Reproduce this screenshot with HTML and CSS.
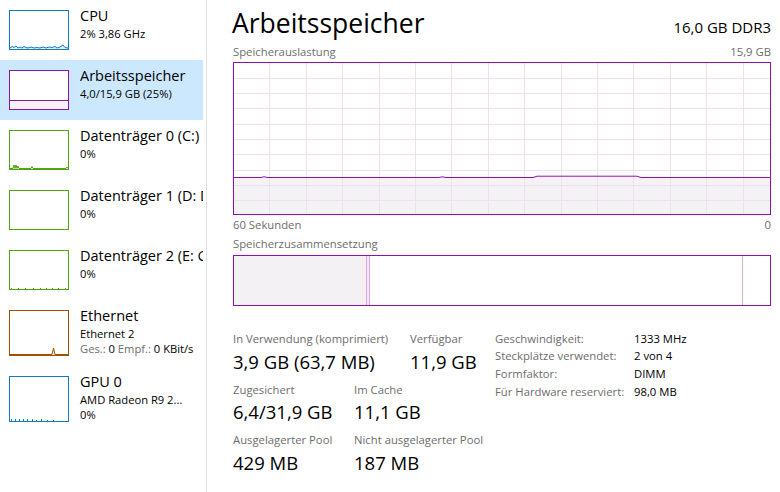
FILE: index.html
```html
<!DOCTYPE html>
<html lang="de">
<head>
<meta charset="utf-8">
<title>Task-Manager – Arbeitsspeicher</title>
<link rel="stylesheet" href="styles.css">
</head>
<body>
<div class="app">
  <aside class="sidebar">
    <div class="item">
      <svg class="thumb" width="60" height="40" viewBox="0 0 60 40">
        <rect x="0.5" y="0.5" width="59" height="39" fill="#fff" stroke="#117dbb"/>
        <polygon fill="#e3eef6" points="1,39 1,38 3,36.5 5,37.5 7,36 9,38 11,37 13,38 15,36.5 17,37.5 19,38 22,37 25,38 28,37.5 31,38 34,37 37,38 40,37 43,37.5 46,36.5 48,38 51,37 54,35 56,37.5 59,38 59,39"/>
        <polyline fill="none" stroke="#117dbb" stroke-width="1" points="1,38 3,36.5 5,37.5 7,36 9,38 11,37 13,38 15,36.5 17,37.5 19,38 22,37 25,38 28,37.5 31,38 34,37 37,38 40,37 43,37.5 46,36.5 48,38 51,37 54,35 56,37.5 59,38"/>
      </svg>
      <div class="info">
        <div class="name">CPU</div>
        <div class="sub">2% 3,86 GHz</div>
      </div>
    </div>
    <div class="item sel">
      <svg class="thumb" width="60" height="40" viewBox="0 0 60 40">
        <rect x="0.5" y="0.5" width="59" height="39" fill="#fff" stroke="#8b12ae"/>
        <rect x="1" y="30" width="58" height="9" fill="#f4f2f5"/>
        <line x1="1" y1="30.5" x2="59" y2="30.5" stroke="#8b12ae"/>
      </svg>
      <div class="info">
        <div class="name">Arbeitsspeicher</div>
        <div class="sub">4,0/15,9 GB (25%)</div>
      </div>
    </div>
    <div class="item">
      <svg class="thumb" width="60" height="40" viewBox="0 0 60 40">
        <rect x="0.5" y="0.5" width="59" height="39" fill="#fff" stroke="#4da60c"/>
        <polyline fill="none" stroke="#4da60c" points="1,38.5 4,38.5 5,35 6,38.5 7,35 8,38.5 9,36 10,38.5 22,38.5 23,36.5 24,38.5 57,38.5 58,37 59,38.5"/>
      </svg>
      <div class="info">
        <div class="name">Datenträger 0 (C:)</div>
        <div class="sub">0%</div>
      </div>
    </div>
    <div class="item">
      <svg class="thumb" width="60" height="40" viewBox="0 0 60 40">
        <rect x="0.5" y="0.5" width="59" height="39" fill="#fff" stroke="#4da60c"/>
      </svg>
      <div class="info">
        <div class="name">Datenträger 1 (D: Daten)</div>
        <div class="sub">0%</div>
      </div>
    </div>
    <div class="item">
      <svg class="thumb" width="60" height="40" viewBox="0 0 60 40">
        <rect x="0.5" y="0.5" width="59" height="39" fill="#fff" stroke="#4da60c"/>
        <g fill="#4da60c">
          <rect x="2" y="38" width="1" height="1"/><rect x="9" y="38" width="1" height="1"/><rect x="16" y="38" width="1" height="1"/>
          <rect x="24" y="38" width="1" height="1"/><rect x="31" y="38" width="1" height="1"/><rect x="37" y="38" width="1" height="1"/>
          <rect x="43" y="38" width="1" height="1"/><rect x="49" y="38" width="1" height="1"/><rect x="56" y="38" width="1" height="1"/>
        </g>
      </svg>
      <div class="info">
        <div class="name">Datenträger 2 (E: Games)</div>
        <div class="sub">0%</div>
      </div>
    </div>
    <div class="item">
      <svg class="thumb" width="60" height="46" viewBox="0 0 60 46">
        <rect x="0.5" y="0.5" width="59" height="45" fill="#fff" stroke="#a74f01"/>
        <polygon fill="#f3e6da" points="43,45 44.5,38 46,45"/>
        <polyline fill="none" stroke="#a74f01" points="1,44.5 43,44.5 44.5,38 46,44.5 59,44.5"/>
      </svg>
      <div class="info">
        <div class="name">Ethernet</div>
        <div class="sub">Ethernet 2</div>
        <div class="sub"><span class="dim">Ges.:</span> 0 <span class="dim">Empf.:</span> 0 KBit/s</div>
      </div>
    </div>
    <div class="item">
      <svg class="thumb" width="60" height="46" viewBox="0 0 60 46">
        <rect x="0.5" y="0.5" width="59" height="45" fill="#fff" stroke="#117dbb"/>
        <g fill="#117dbb">
          <rect x="2" y="43" width="1" height="2"/><rect x="6" y="43" width="1" height="2"/><rect x="10" y="43" width="1" height="2"/>
          <rect x="14" y="43" width="1" height="2"/><rect x="18" y="43" width="1" height="2"/><rect x="23" y="43" width="1" height="2"/>
          <rect x="27" y="44" width="1" height="1"/><rect x="32" y="43" width="1" height="2"/><rect x="38" y="44" width="1" height="1"/>
          <rect x="44" y="44" width="1" height="1"/>
        </g>
      </svg>
      <div class="info">
        <div class="name">GPU 0</div>
        <div class="sub">AMD Radeon R9 2...</div>
        <div class="sub">0%</div>
      </div>
    </div>
  </aside>

  <main class="main">
    <header class="head">
      <h1 class="title">Arbeitsspeicher</h1>
      <span class="spec">16,0 GB DDR3</span>
    </header>

    <div class="axis axis-top"><span>Speicherauslastung</span><span>15,9 GB</span></div>
    <svg class="graph" width="538" height="153" viewBox="0 0 538 153" shape-rendering="crispEdges">
      <rect x="0" y="0" width="538" height="153" fill="#fff"/>
      <polygon fill="#f4f2f5" points="1,115.5 28,115.5 31,114.8 35,115.5 206,115.5 209,114.8 213,115.5 300,115.5 304,114 404,114 408,115.5 537,115.5 537,152 1,152"/>
      <g stroke="#ede0f2" stroke-width="1">
        <line x1="0" y1="16.5" x2="538" y2="16.5"/>
        <line x1="0" y1="31.5" x2="538" y2="31.5"/>
        <line x1="0" y1="46.5" x2="538" y2="46.5"/>
        <line x1="0" y1="62.5" x2="538" y2="62.5"/>
        <line x1="0" y1="77.5" x2="538" y2="77.5"/>
        <line x1="0" y1="92.5" x2="538" y2="92.5"/>
        <line x1="0" y1="108.5" x2="538" y2="108.5"/>
        <line x1="0" y1="123.5" x2="538" y2="123.5"/>
        <line x1="0" y1="138.5" x2="538" y2="138.5"/>
        <line x1="36.5" y1="0" x2="36.5" y2="153"/>
        <line x1="73.5" y1="0" x2="73.5" y2="153"/>
        <line x1="109.5" y1="0" x2="109.5" y2="153"/>
        <line x1="146.5" y1="0" x2="146.5" y2="153"/>
        <line x1="182.5" y1="0" x2="182.5" y2="153"/>
        <line x1="218.5" y1="0" x2="218.5" y2="153"/>
        <line x1="255.5" y1="0" x2="255.5" y2="153"/>
        <line x1="291.5" y1="0" x2="291.5" y2="153"/>
        <line x1="328.5" y1="0" x2="328.5" y2="153"/>
        <line x1="364.5" y1="0" x2="364.5" y2="153"/>
        <line x1="400.5" y1="0" x2="400.5" y2="153"/>
        <line x1="437.5" y1="0" x2="437.5" y2="153"/>
        <line x1="473.5" y1="0" x2="473.5" y2="153"/>
        <line x1="510.5" y1="0" x2="510.5" y2="153"/>
      </g>
      <polyline fill="none" stroke="#8b12ae" stroke-width="1" shape-rendering="auto" points="1,115.5 28,115.5 31,114.8 35,115.5 206,115.5 209,114.8 213,115.5 300,115.5 304,114.2 404,114.2 408,115.5 537,115.5"/>
      <rect x="0.5" y="0.5" width="537" height="152" fill="none" stroke="#8b12ae"/>
    </svg>
    <div class="axis axis-bottom"><span>60 Sekunden</span><span>0</span></div>

    <div class="axis axis-comp"><span>Speicherzusammensetzung</span></div>
    <div class="comp">
      <div class="seg seg-use"></div>
      <div class="seg seg-mod"></div>
      <div class="seg seg-standby"></div>
      <div class="seg seg-free"></div>
    </div>

    <section class="stats">
      <div class="stat-grid">
        <div class="row">
          <div class="stat w-wide">
            <div class="lbl">In Verwendung (komprimiert)</div>
            <div class="val">3,9 GB (63,7 MB)</div>
          </div>
          <div class="stat">
            <div class="lbl">Verfügbar</div>
            <div class="val">11,9 GB</div>
          </div>
        </div>
        <div class="row">
          <div class="stat w-narrow">
            <div class="lbl">Zugesichert</div>
            <div class="val">6,4/31,9 GB</div>
          </div>
          <div class="stat">
            <div class="lbl">Im Cache</div>
            <div class="val">11,1 GB</div>
          </div>
        </div>
        <div class="row">
          <div class="stat w-narrow">
            <div class="lbl">Ausgelagerter Pool</div>
            <div class="val">429 MB</div>
          </div>
          <div class="stat">
            <div class="lbl">Nicht ausgelagerter Pool</div>
            <div class="val">187 MB</div>
          </div>
        </div>
      </div>
      <dl class="props">
        <dt>Geschwindigkeit:</dt><dd>1333 MHz</dd>
        <dt>Steckplätze verwendet:</dt><dd>2 von 4</dd>
        <dt>Formfaktor:</dt><dd>DIMM</dd>
        <dt>Für Hardware reserviert:</dt><dd>98,0 MB</dd>
      </dl>
    </section>
  </main>
</div>
</body>
</html>
```

FILE: styles.css
```css
html, body {
  margin: 0;
  padding: 0;
  background: #fff;
}

body {
  font-family: "Open Sans", "Noto Sans", "DejaVu Sans", sans-serif;
  color: #000;
}

.app {
  display: flex;
  width: 780px;
  height: 492px;
  overflow: hidden;
}

/* ---------- sidebar ---------- */
.sidebar {
  width: 206px;
  flex-shrink: 0;
  border-right: 1px solid #e2e2e2;
}

.item {
  width: 203px;
  box-sizing: border-box;
  display: flex;
  align-items: flex-start;
  padding: 10px 0 10px 9px;
  overflow: hidden;
  white-space: nowrap;
}

.item.sel {
  background: #cce8ff;
}

.thumb {
  display: block;
  flex-shrink: 0;
}

.info {
  margin-left: 11px;
  margin-top: -3px;
  min-width: 0;
}

.name {
  font-size: 14.5px;
  line-height: 18.5px;
}

.sub {
  font-size: 11.2px;
  line-height: 15px;
}

.dim {
  color: #6d6d6d;
}

/* ---------- main ---------- */
.main {
  flex: 1;
  min-width: 0;
  padding: 5px 9px 0 26px;
}

.head {
  display: flex;
  justify-content: space-between;
  align-items: baseline;
}

.title {
  margin: 0 0 0 -1px;
  font-size: 26.5px;
  font-weight: 400;
  line-height: 36px;
}

.spec {
  font-size: 15px;
}

.axis {
  display: flex;
  justify-content: space-between;
  font-size: 11.3px;
  line-height: 15px;
  color: #6d6d6d;
}

.axis-top {
  margin: 3px 0 3px;
}

.axis-bottom {
  margin-top: 2px;
}

.axis-comp {
  margin: 3.5px 0 4.5px;
}

.graph {
  display: block;
}

/* composition bar */
.comp {
  display: flex;
  width: 538px;
  height: 51px;
  box-sizing: border-box;
  border: 1px solid #8b12ae;
}

.seg {
  height: 100%;
}

.seg-use {
  width: 132px;
  background: #f3f1f4;
  border-right: 1px solid #d6a9e2;
}

.seg-mod {
  width: 2px;
  background: #f1e7f4;
  border-right: 1px solid #d6a9e2;
}

.seg-standby {
  width: 372px;
  background: #fff;
  border-right: 1px solid #cbb5d3;
}

.seg-free {
  flex: 1;
  background: #fff;
}

/* stats */
.stats {
  display: flex;
  align-items: flex-start;
  margin-top: 25px;
}

.stat-grid {
  width: 262px;
  flex-shrink: 0;
}

.row {
  display: flex;
  margin-bottom: 8px;
}

.w-wide {
  width: 177px;
}

.w-narrow {
  width: 121px;
}

.lbl {
  font-size: 11.3px;
  line-height: 15px;
  color: #6d6d6d;
  white-space: nowrap;
}

.val {
  margin-top: 3.5px;
  font-size: 18.5px;
  line-height: 24px;
  white-space: nowrap;
}

.props {
  display: grid;
  grid-template-columns: 139px auto;
  align-content: start;
  margin: -1.3px 0 0;
  font-size: 11.3px;
  line-height: 17.7px;
}

.props dt {
  color: #6d6d6d;
  white-space: nowrap;
}

.props dd {
  margin: 0;
  white-space: nowrap;
}
```
